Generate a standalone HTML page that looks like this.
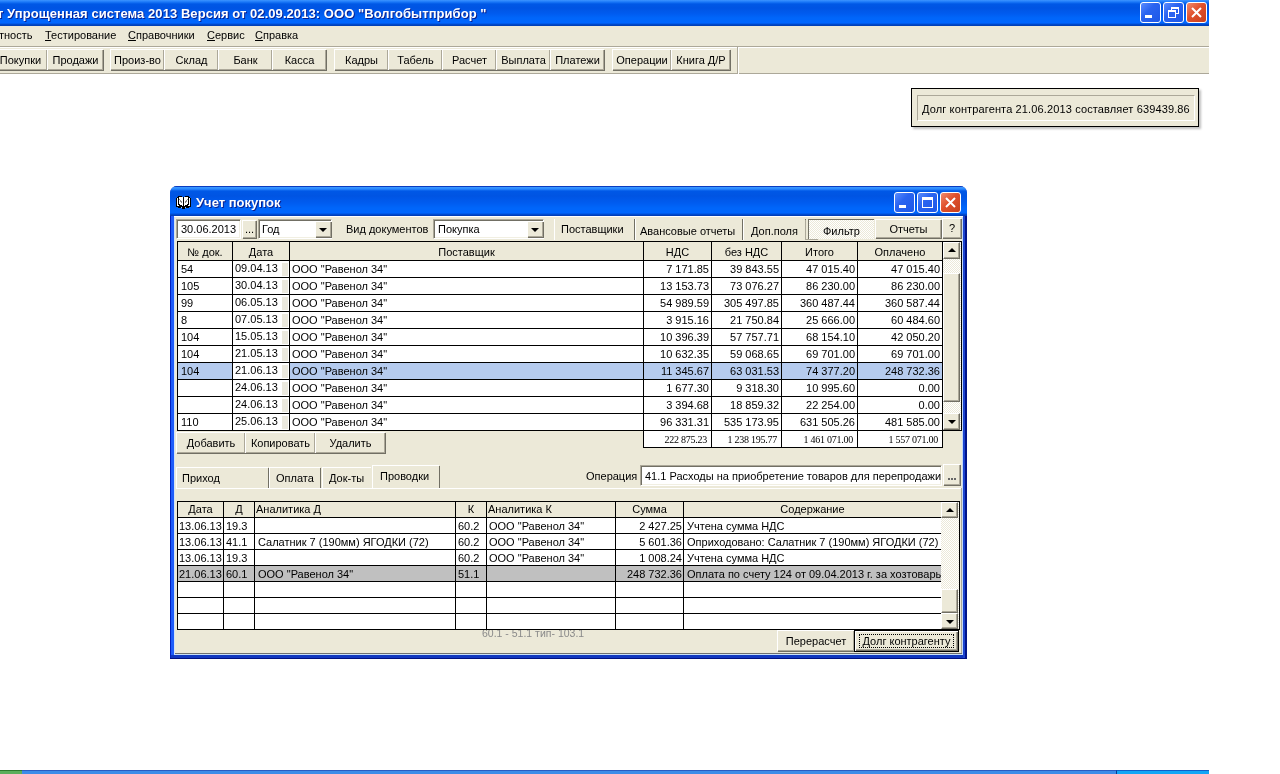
<!DOCTYPE html><html><head><meta charset="utf-8"><style>
*{margin:0;padding:0;box-sizing:border-box}
html{background:#fff}
body{will-change:transform;width:1280px;height:774px;overflow:hidden;background:#fff;position:relative;font-family:"Liberation Sans",sans-serif;font-size:11px;color:#000}
.a{position:absolute}
.t{position:absolute;white-space:nowrap;line-height:16px;font-size:11px}
.face{background:#ECE9D8}
.btn{position:absolute;background:#ECE9D8;border-top:1px solid #fff;border-left:1px solid #fff;box-shadow:inset -1px -1px 0 #ACA899, 1px 1px 0 #716F64;white-space:nowrap;text-align:center;line-height:18px}
.xpbtn{position:absolute;width:21px;height:21px;border:1px solid #fff;border-radius:3px;background:linear-gradient(135deg,#5A8CFF 0%,#2A64F0 40%,#1D58E8 100%)}
.xpclose{background:linear-gradient(135deg,#F08A6E 0%,#E0502C 45%,#C8401E 100%)}
.sunk{position:absolute;background:#fff;border-top:1px solid #ACA899;border-left:1px solid #ACA899;border-bottom:1px solid #fff;border-right:1px solid #fff;box-shadow:inset 1px 1px 0 #716F64, inset -1px -1px 0 #F1EFE2}
.hl{position:absolute;height:1px;background:#000}
.vl{position:absolute;width:1px;background:#000}
.hdr{position:absolute;background:#ECE9D8}
.sb{position:absolute;background:#ECE9D8;border-top:1px solid #fff;border-left:1px solid #fff;box-shadow:inset -1px -1px 0 #ACA899, inset 0 0 0 0 #000, 0 0 0 0 #000;border-right:1px solid #716F64;border-bottom:1px solid #716F64}
.track{position:absolute;background-color:#F4F3EE;background-image:repeating-conic-gradient(#ECE9D8 0% 25%, #fff 0% 50%);background-size:2px 2px}
.arrup{position:absolute;width:0;height:0;border-left:4px solid transparent;border-right:4px solid transparent;border-bottom:4px solid #000}
.arrdn{position:absolute;width:0;height:0;border-left:4px solid transparent;border-right:4px solid transparent;border-top:4px solid #000}
</style></head><body>
<div class="a" style="left:0;top:0;width:1209px;height:26px;background:linear-gradient(#3D95FF 0px,#1A78F8 2px,#0058E6 4px,#0054E3 8px,#005CF0 14px,#0066FA 18px,#0066FF 23px,#0050D8 24px,#0040B8 25px,#0040B8 26px)"></div>
<div class="t" style="left:-3px;top:6px;color:#fff;font-weight:bold;font-size:13px;line-height:16px;letter-spacing:0.06px;text-shadow:1px 1px 0 #0A1E8C">т Упрощенная система 2013 Версия от 02.09.2013: ООО "Волгобытприбор "</div>
<div class="xpbtn" style="left:1140px;top:2px"><div class="a" style="left:4px;top:12px;width:7px;height:3px;background:#fff"></div></div>
<div class="xpbtn" style="left:1163px;top:2px"><div class="a" style="left:7px;top:4px;width:8px;height:7px;border:1px solid #fff;border-top-width:2px"></div><div class="a" style="left:4px;top:7px;width:8px;height:8px;border:1px solid #fff;border-top-width:2px;background:#2A64F0"></div></div>
<div class="xpbtn xpclose" style="left:1186px;top:2px"><svg class="a" style="left:0;top:0" width="19" height="19"><path d="M5 5L14 14M14 5L5 14" stroke="#fff" stroke-width="2"/></svg></div>
<div class="a face" style="left:0;top:26px;width:1209px;height:48px"></div>
<div class="a" style="left:0;top:46px;width:1209px;height:1px;background:#ACA899"></div>
<div class="a" style="left:0;top:47px;width:1209px;height:1px;background:#fff"></div>
<div class="a" style="left:0;top:73px;width:1209px;height:1px;background:#ACA899"></div>
<div class="t" style="left:-1px;top:27px">тность</div>
<div class="t" style="left:45px;top:27px"><u>Т</u>естирование</div>
<div class="t" style="left:128px;top:27px"><u>С</u>правочники</div>
<div class="t" style="left:207px;top:27px"><u>С</u>ервис</div>
<div class="t" style="left:255px;top:27px"><u>С</u>правка</div>
<div class="btn" style="left:-7px;top:49px;width:54px;height:21px;line-height:20px">Покупки</div>
<div class="btn" style="left:47px;top:49px;width:56px;height:21px;line-height:20px">Продажи</div>
<div class="btn" style="left:110px;top:49px;width:54px;height:21px;line-height:20px">Произ-во</div>
<div class="btn" style="left:164px;top:49px;width:54px;height:21px;line-height:20px">Склад</div>
<div class="btn" style="left:218px;top:49px;width:54px;height:21px;line-height:20px">Банк</div>
<div class="btn" style="left:272px;top:49px;width:54px;height:21px;line-height:20px">Касса</div>
<div class="btn" style="left:334px;top:49px;width:54px;height:21px;line-height:20px">Кадры</div>
<div class="btn" style="left:388px;top:49px;width:54px;height:21px;line-height:20px">Табель</div>
<div class="btn" style="left:442px;top:49px;width:54px;height:21px;line-height:20px">Расчет</div>
<div class="btn" style="left:496px;top:49px;width:54px;height:21px;line-height:20px">Выплата</div>
<div class="btn" style="left:550px;top:49px;width:54px;height:21px;line-height:20px">Платежи</div>
<div class="btn" style="left:612px;top:49px;width:59px;height:21px;line-height:20px">Операции</div>
<div class="btn" style="left:671px;top:49px;width:59px;height:21px;line-height:20px">Книга Д/Р</div>
<div class="a" style="left:737px;top:46px;width:1px;height:28px;background:#ACA899"></div><div class="a" style="left:738px;top:47px;width:1px;height:27px;background:#fff"></div>
<div class="a" style="left:913px;top:90px;width:288px;height:39px;background:rgba(0,0,0,0.25);filter:blur(1px)"></div>
<div class="a face" style="left:911px;top:88px;width:288px;height:39px;border:1px solid #000"></div>
<div class="a" style="left:917px;top:95px;width:278px;height:26px;border-top:1px solid #ACA899;border-left:1px solid #ACA899;border-bottom:1px solid #fff;border-right:1px solid #fff"></div>
<div class="t" style="left:922px;top:101px;letter-spacing:0.13px">Долг контрагента 21.06.2013 составляет 639439.86</div>
<div class="a" style="left:0;top:770px;width:1209px;height:4px;background:#3C8CE8;border-top:1px solid #2A5CC0"></div>
<div class="a" style="left:0;top:770px;width:22px;height:4px;background:#5CAE5C;border-top:1px solid #2E7A2E"></div>
<div class="a" style="left:1116px;top:770px;width:93px;height:4px;background:#12A6F6;border-top:1px solid #1060C8;border-left:1px solid #0A3A90"></div>
<div class="a" style="left:170px;top:186px;width:797px;height:473px;background:#1038C0;border-radius:7px 7px 0 0"></div>
<div class="a" style="left:170px;top:186px;width:797px;height:30px;border-radius:7px 7px 0 0;background:linear-gradient(#0A3CC0 0px,#0A3CC0 1px,#3C9AFF 1px,#2A88FF 3px,#0058E6 5px,#0054E3 10px,#005CF0 17px,#0066FA 22px,#0066FF 27px,#0050D8 28px,#0038B0 30px)"></div>
<div class="a" style="left:170px;top:216px;width:1px;height:443px;background:#0020C0"></div><div class="a" style="left:171px;top:216px;width:3px;height:439px;background:#1E5CFA"></div><div class="a" style="left:174px;top:216px;width:1px;height:439px;background:#D0E2F8"></div>
<div class="a" style="left:962px;top:216px;width:1px;height:439px;background:#C0D8F8"></div><div class="a" style="left:963px;top:216px;width:2px;height:443px;background:#1C44D0"></div><div class="a" style="left:965px;top:216px;width:2px;height:443px;background:#001488"></div>
<div class="a" style="left:174px;top:654px;width:789px;height:1px;background:#C8E0F8"></div><div class="a" style="left:171px;top:655px;width:792px;height:3px;background:#1038C0"></div><div class="a" style="left:170px;top:658px;width:797px;height:1px;background:#001080"></div>
<div class="a face" style="left:175px;top:216px;width:787px;height:438px"></div>
<div class="a" style="left:175px;top:653px;width:787px;height:1px;background:#6E7070"></div>
<svg class="a" style="left:176px;top:196px" width="15" height="13" viewBox="0 0 15 13" shape-rendering="crispEdges"><rect x="2" y="0" width="1" height="1" fill="#000"/><rect x="3" y="0" width="1" height="1" fill="#000"/><rect x="4" y="0" width="1" height="1" fill="#000"/><rect x="5" y="0" width="1" height="1" fill="#000"/><rect x="9" y="0" width="1" height="1" fill="#000"/><rect x="10" y="0" width="1" height="1" fill="#000"/><rect x="11" y="0" width="1" height="1" fill="#000"/><rect x="12" y="0" width="1" height="1" fill="#000"/><rect x="1" y="1" width="1" height="1" fill="#000"/><rect x="2" y="1" width="1" height="1" fill="#000"/><rect x="3" y="1" width="1" height="1" fill="#fff"/><rect x="4" y="1" width="1" height="1" fill="#fff"/><rect x="5" y="1" width="1" height="1" fill="#fff"/><rect x="6" y="1" width="1" height="1" fill="#fff"/><rect x="7" y="1" width="1" height="1" fill="#000"/><rect x="8" y="1" width="1" height="1" fill="#fff"/><rect x="9" y="1" width="1" height="1" fill="#fff"/><rect x="10" y="1" width="1" height="1" fill="#fff"/><rect x="11" y="1" width="1" height="1" fill="#fff"/><rect x="12" y="1" width="1" height="1" fill="#000"/><rect x="13" y="1" width="1" height="1" fill="#000"/><rect x="0" y="2" width="1" height="1" fill="#000"/><rect x="1" y="2" width="1" height="1" fill="#fff"/><rect x="2" y="2" width="1" height="1" fill="#000"/><rect x="3" y="2" width="1" height="1" fill="#fff"/><rect x="4" y="2" width="1" height="1" fill="#fff"/><rect x="5" y="2" width="1" height="1" fill="#fff"/><rect x="6" y="2" width="1" height="1" fill="#fff"/><rect x="7" y="2" width="1" height="1" fill="#000"/><rect x="8" y="2" width="1" height="1" fill="#fff"/><rect x="9" y="2" width="1" height="1" fill="#fff"/><rect x="10" y="2" width="1" height="1" fill="#fff"/><rect x="11" y="2" width="1" height="1" fill="#fff"/><rect x="12" y="2" width="1" height="1" fill="#000"/><rect x="13" y="2" width="1" height="1" fill="#fff"/><rect x="14" y="2" width="1" height="1" fill="#000"/><rect x="0" y="3" width="1" height="1" fill="#000"/><rect x="1" y="3" width="1" height="1" fill="#fff"/><rect x="2" y="3" width="1" height="1" fill="#000"/><rect x="3" y="3" width="1" height="1" fill="#8C8C8C"/><rect x="4" y="3" width="1" height="1" fill="#fff"/><rect x="5" y="3" width="1" height="1" fill="#fff"/><rect x="6" y="3" width="1" height="1" fill="#fff"/><rect x="7" y="3" width="1" height="1" fill="#000"/><rect x="8" y="3" width="1" height="1" fill="#fff"/><rect x="9" y="3" width="1" height="1" fill="#fff"/><rect x="10" y="3" width="1" height="1" fill="#fff"/><rect x="11" y="3" width="1" height="1" fill="#8C8C8C"/><rect x="12" y="3" width="1" height="1" fill="#000"/><rect x="13" y="3" width="1" height="1" fill="#fff"/><rect x="14" y="3" width="1" height="1" fill="#000"/><rect x="0" y="4" width="1" height="1" fill="#000"/><rect x="1" y="4" width="1" height="1" fill="#fff"/><rect x="2" y="4" width="1" height="1" fill="#000"/><rect x="3" y="4" width="1" height="1" fill="#fff"/><rect x="4" y="4" width="1" height="1" fill="#8C8C8C"/><rect x="5" y="4" width="1" height="1" fill="#fff"/><rect x="6" y="4" width="1" height="1" fill="#fff"/><rect x="7" y="4" width="1" height="1" fill="#000"/><rect x="8" y="4" width="1" height="1" fill="#fff"/><rect x="9" y="4" width="1" height="1" fill="#fff"/><rect x="10" y="4" width="1" height="1" fill="#8C8C8C"/><rect x="11" y="4" width="1" height="1" fill="#fff"/><rect x="12" y="4" width="1" height="1" fill="#000"/><rect x="13" y="4" width="1" height="1" fill="#fff"/><rect x="14" y="4" width="1" height="1" fill="#000"/><rect x="0" y="5" width="1" height="1" fill="#000"/><rect x="1" y="5" width="1" height="1" fill="#fff"/><rect x="2" y="5" width="1" height="1" fill="#000"/><rect x="3" y="5" width="1" height="1" fill="#fff"/><rect x="4" y="5" width="1" height="1" fill="#8C8C8C"/><rect x="5" y="5" width="1" height="1" fill="#8C8C8C"/><rect x="6" y="5" width="1" height="1" fill="#fff"/><rect x="7" y="5" width="1" height="1" fill="#000"/><rect x="8" y="5" width="1" height="1" fill="#fff"/><rect x="9" y="5" width="1" height="1" fill="#8C8C8C"/><rect x="10" y="5" width="1" height="1" fill="#8C8C8C"/><rect x="11" y="5" width="1" height="1" fill="#fff"/><rect x="12" y="5" width="1" height="1" fill="#000"/><rect x="13" y="5" width="1" height="1" fill="#fff"/><rect x="14" y="5" width="1" height="1" fill="#000"/><rect x="0" y="6" width="1" height="1" fill="#000"/><rect x="1" y="6" width="1" height="1" fill="#fff"/><rect x="2" y="6" width="1" height="1" fill="#000"/><rect x="3" y="6" width="1" height="1" fill="#fff"/><rect x="4" y="6" width="1" height="1" fill="#fff"/><rect x="5" y="6" width="1" height="1" fill="#8C8C8C"/><rect x="6" y="6" width="1" height="1" fill="#fff"/><rect x="7" y="6" width="1" height="1" fill="#000"/><rect x="8" y="6" width="1" height="1" fill="#fff"/><rect x="9" y="6" width="1" height="1" fill="#8C8C8C"/><rect x="10" y="6" width="1" height="1" fill="#fff"/><rect x="11" y="6" width="1" height="1" fill="#fff"/><rect x="12" y="6" width="1" height="1" fill="#000"/><rect x="13" y="6" width="1" height="1" fill="#fff"/><rect x="14" y="6" width="1" height="1" fill="#000"/><rect x="0" y="7" width="1" height="1" fill="#000"/><rect x="1" y="7" width="1" height="1" fill="#fff"/><rect x="2" y="7" width="1" height="1" fill="#000"/><rect x="3" y="7" width="1" height="1" fill="#fff"/><rect x="4" y="7" width="1" height="1" fill="#fff"/><rect x="5" y="7" width="1" height="1" fill="#fff"/><rect x="6" y="7" width="1" height="1" fill="#fff"/><rect x="7" y="7" width="1" height="1" fill="#000"/><rect x="8" y="7" width="1" height="1" fill="#fff"/><rect x="9" y="7" width="1" height="1" fill="#fff"/><rect x="10" y="7" width="1" height="1" fill="#fff"/><rect x="11" y="7" width="1" height="1" fill="#fff"/><rect x="12" y="7" width="1" height="1" fill="#000"/><rect x="13" y="7" width="1" height="1" fill="#fff"/><rect x="14" y="7" width="1" height="1" fill="#000"/><rect x="0" y="8" width="1" height="1" fill="#000"/><rect x="1" y="8" width="1" height="1" fill="#fff"/><rect x="2" y="8" width="1" height="1" fill="#000"/><rect x="3" y="8" width="1" height="1" fill="#000"/><rect x="4" y="8" width="1" height="1" fill="#fff"/><rect x="5" y="8" width="1" height="1" fill="#fff"/><rect x="6" y="8" width="1" height="1" fill="#fff"/><rect x="7" y="8" width="1" height="1" fill="#000"/><rect x="8" y="8" width="1" height="1" fill="#fff"/><rect x="9" y="8" width="1" height="1" fill="#fff"/><rect x="10" y="8" width="1" height="1" fill="#fff"/><rect x="11" y="8" width="1" height="1" fill="#000"/><rect x="12" y="8" width="1" height="1" fill="#000"/><rect x="13" y="8" width="1" height="1" fill="#fff"/><rect x="14" y="8" width="1" height="1" fill="#000"/><rect x="0" y="9" width="1" height="1" fill="#000"/><rect x="1" y="9" width="1" height="1" fill="#fff"/><rect x="2" y="9" width="1" height="1" fill="#fff"/><rect x="3" y="9" width="1" height="1" fill="#000"/><rect x="4" y="9" width="1" height="1" fill="#000"/><rect x="5" y="9" width="1" height="1" fill="#000"/><rect x="6" y="9" width="1" height="1" fill="#fff"/><rect x="7" y="9" width="1" height="1" fill="#000"/><rect x="8" y="9" width="1" height="1" fill="#fff"/><rect x="9" y="9" width="1" height="1" fill="#000"/><rect x="10" y="9" width="1" height="1" fill="#000"/><rect x="11" y="9" width="1" height="1" fill="#000"/><rect x="12" y="9" width="1" height="1" fill="#fff"/><rect x="13" y="9" width="1" height="1" fill="#fff"/><rect x="14" y="9" width="1" height="1" fill="#000"/><rect x="0" y="10" width="1" height="1" fill="#000"/><rect x="1" y="10" width="1" height="1" fill="#000"/><rect x="2" y="10" width="1" height="1" fill="#000"/><rect x="3" y="10" width="1" height="1" fill="#000"/><rect x="4" y="10" width="1" height="1" fill="#000"/><rect x="5" y="10" width="1" height="1" fill="#000"/><rect x="6" y="10" width="1" height="1" fill="#000"/><rect x="7" y="10" width="1" height="1" fill="#000"/><rect x="8" y="10" width="1" height="1" fill="#000"/><rect x="9" y="10" width="1" height="1" fill="#000"/><rect x="10" y="10" width="1" height="1" fill="#000"/><rect x="11" y="10" width="1" height="1" fill="#000"/><rect x="12" y="10" width="1" height="1" fill="#000"/><rect x="13" y="10" width="1" height="1" fill="#000"/><rect x="14" y="10" width="1" height="1" fill="#000"/><rect x="2" y="11" width="1" height="1" fill="#000"/><rect x="3" y="11" width="1" height="1" fill="#000"/><rect x="4" y="11" width="1" height="1" fill="#000"/><rect x="5" y="11" width="1" height="1" fill="#A8D0FF"/><rect x="6" y="11" width="1" height="1" fill="#000"/><rect x="7" y="11" width="1" height="1" fill="#000"/><rect x="8" y="11" width="1" height="1" fill="#000"/><rect x="9" y="11" width="1" height="1" fill="#A8D0FF"/><rect x="10" y="11" width="1" height="1" fill="#000"/><rect x="11" y="11" width="1" height="1" fill="#000"/><rect x="12" y="11" width="1" height="1" fill="#000"/><rect x="6" y="12" width="1" height="1" fill="#000"/><rect x="7" y="12" width="1" height="1" fill="#000"/><rect x="8" y="12" width="1" height="1" fill="#000"/></svg>
<div class="t" style="left:196px;top:195px;color:#fff;font-weight:bold;font-size:13px;text-shadow:1px 1px 0 #0A1E8C">Учет покупок</div>
<div class="xpbtn" style="left:894px;top:192px"><div class="a" style="left:4px;top:12px;width:7px;height:3px;background:#fff"></div></div>
<div class="xpbtn" style="left:917px;top:192px"><div class="a" style="left:4px;top:4px;width:11px;height:11px;border:1px solid #fff;border-top-width:3px"></div></div>
<div class="xpbtn xpclose" style="left:940px;top:192px"><svg class="a" style="left:0;top:0" width="19" height="19"><path d="M5 5L14 14M14 5L5 14" stroke="#fff" stroke-width="2"/></svg></div>
<div class="sunk" style="left:176px;top:219px;width:65px;height:20px"></div>
<div class="t" style="left:181px;top:221px">30.06.2013</div>
<div class="btn" style="left:242px;top:220px;width:14px;height:18px;line-height:16px">...</div>
<div class="sunk" style="left:258px;top:219px;width:74px;height:20px"></div>
<div class="t" style="left:262px;top:221px">Год</div>
<div class="btn" style="left:315px;top:221px;width:16px;height:16px"><div class="arrdn" style="left:3px;top:6px"></div></div>
<div class="t" style="left:346px;top:221px">Вид документов</div>
<div class="sunk" style="left:433px;top:219px;width:111px;height:20px"></div>
<div class="t" style="left:438px;top:221px">Покупка</div>
<div class="btn" style="left:527px;top:221px;width:16px;height:16px"><div class="arrdn" style="left:3px;top:6px"></div></div>
<div class="a" style="left:174px;top:216px;width:789px;height:1px;background:#fff"></div>
<div class="a" style="left:554px;top:219px;width:1px;height:21px;background:#fff"></div>
<div class="a" style="left:634px;top:219px;width:1px;height:21px;background:#716F64"></div>
<div class="t" style="left:561px;top:221px">Поставщики</div>
<div class="a" style="left:635px;top:219px;width:1px;height:21px;background:#fff"></div>
<div class="a" style="left:742px;top:219px;width:1px;height:21px;background:#716F64"></div>
<div class="t" style="left:640px;top:223px">Авансовые отчеты</div>
<div class="a" style="left:743px;top:219px;width:1px;height:21px;background:#fff"></div>
<div class="a" style="left:805px;top:219px;width:1px;height:21px;background:#716F64"></div>
<div class="t" style="left:751px;top:223px">Доп.поля</div>
<div class="btn" style="left:875px;top:219px;width:66px;height:19px;line-height:18px">Отчеты</div>
<div class="btn" style="left:942px;top:218px;width:19px;height:20px;line-height:18px">?</div>
<div class="a" style="left:805px;top:220px;width:1px;height:20px;background:#ACA899"></div><div class="a" style="left:805px;top:239px;width:13px;height:1px;background:#ACA899"></div>
<div class="track" style="left:808px;top:219px;width:66px;height:20px;border-top:1px solid #716F64;border-left:1px solid #716F64"></div>
<div class="t" style="left:823px;top:223px">Фильтр</div>
<div class="a" style="left:177px;top:241px;width:766px;height:190px;background:#fff"></div>
<div class="hdr" style="left:178px;top:242px;width:764px;height:18px"></div>
<div class="t" style="left:178px;top:244px;width:54px;text-align:center">№ док.</div>
<div class="t" style="left:233px;top:244px;width:56px;text-align:center">Дата</div>
<div class="t" style="left:290px;top:244px;width:353px;text-align:center">Поставщик</div>
<div class="t" style="left:644px;top:244px;width:67px;text-align:center">НДС</div>
<div class="t" style="left:712px;top:244px;width:69px;text-align:center">без НДС</div>
<div class="t" style="left:782px;top:244px;width:75px;text-align:center">Итого</div>
<div class="t" style="left:858px;top:244px;width:84px;text-align:center">Оплачено</div>
<div class="a" style="left:282px;top:263px;width:6px;height:13px;background:#EBE9DE"></div>
<div class="t" style="left:181px;top:261px">54</div>
<div class="t" style="left:235px;top:260px">09.04.13</div>
<div class="t" style="left:292px;top:261px">ООО "Равенол 34"</div>
<div class="t" style="left:643px;top:261px;width:66px;text-align:right">7 171.85</div>
<div class="t" style="left:711px;top:261px;width:68px;text-align:right">39 843.55</div>
<div class="t" style="left:781px;top:261px;width:74px;text-align:right">47 015.40</div>
<div class="t" style="left:857px;top:261px;width:83px;text-align:right">47 015.40</div>
<div class="a" style="left:282px;top:280px;width:6px;height:13px;background:#EBE9DE"></div>
<div class="t" style="left:181px;top:278px">105</div>
<div class="t" style="left:235px;top:277px">30.04.13</div>
<div class="t" style="left:292px;top:278px">ООО "Равенол 34"</div>
<div class="t" style="left:643px;top:278px;width:66px;text-align:right">13 153.73</div>
<div class="t" style="left:711px;top:278px;width:68px;text-align:right">73 076.27</div>
<div class="t" style="left:781px;top:278px;width:74px;text-align:right">86 230.00</div>
<div class="t" style="left:857px;top:278px;width:83px;text-align:right">86 230.00</div>
<div class="a" style="left:282px;top:297px;width:6px;height:13px;background:#EBE9DE"></div>
<div class="t" style="left:181px;top:295px">99</div>
<div class="t" style="left:235px;top:294px">06.05.13</div>
<div class="t" style="left:292px;top:295px">ООО "Равенол 34"</div>
<div class="t" style="left:643px;top:295px;width:66px;text-align:right">54 989.59</div>
<div class="t" style="left:711px;top:295px;width:68px;text-align:right">305 497.85</div>
<div class="t" style="left:781px;top:295px;width:74px;text-align:right">360 487.44</div>
<div class="t" style="left:857px;top:295px;width:83px;text-align:right">360 587.44</div>
<div class="a" style="left:282px;top:314px;width:6px;height:13px;background:#EBE9DE"></div>
<div class="t" style="left:181px;top:312px">8</div>
<div class="t" style="left:235px;top:311px">07.05.13</div>
<div class="t" style="left:292px;top:312px">ООО "Равенол 34"</div>
<div class="t" style="left:643px;top:312px;width:66px;text-align:right">3 915.16</div>
<div class="t" style="left:711px;top:312px;width:68px;text-align:right">21 750.84</div>
<div class="t" style="left:781px;top:312px;width:74px;text-align:right">25 666.00</div>
<div class="t" style="left:857px;top:312px;width:83px;text-align:right">60 484.60</div>
<div class="a" style="left:282px;top:331px;width:6px;height:13px;background:#EBE9DE"></div>
<div class="t" style="left:181px;top:329px">104</div>
<div class="t" style="left:235px;top:328px">15.05.13</div>
<div class="t" style="left:292px;top:329px">ООО "Равенол 34"</div>
<div class="t" style="left:643px;top:329px;width:66px;text-align:right">10 396.39</div>
<div class="t" style="left:711px;top:329px;width:68px;text-align:right">57 757.71</div>
<div class="t" style="left:781px;top:329px;width:74px;text-align:right">68 154.10</div>
<div class="t" style="left:857px;top:329px;width:83px;text-align:right">42 050.20</div>
<div class="a" style="left:282px;top:348px;width:6px;height:13px;background:#EBE9DE"></div>
<div class="t" style="left:181px;top:346px">104</div>
<div class="t" style="left:235px;top:345px">21.05.13</div>
<div class="t" style="left:292px;top:346px">ООО "Равенол 34"</div>
<div class="t" style="left:643px;top:346px;width:66px;text-align:right">10 632.35</div>
<div class="t" style="left:711px;top:346px;width:68px;text-align:right">59 068.65</div>
<div class="t" style="left:781px;top:346px;width:74px;text-align:right">69 701.00</div>
<div class="t" style="left:857px;top:346px;width:83px;text-align:right">69 701.00</div>
<div class="a" style="left:178px;top:363px;width:764px;height:16px;background:#B5CBEE"></div>
<div class="a" style="left:233px;top:363px;width:56px;height:16px;background:#fff"></div>
<div class="a" style="left:282px;top:365px;width:6px;height:13px;background:#EBE9DE"></div>
<div class="t" style="left:181px;top:363px">104</div>
<div class="t" style="left:235px;top:362px">21.06.13</div>
<div class="t" style="left:292px;top:363px">ООО "Равенол 34"</div>
<div class="t" style="left:643px;top:363px;width:66px;text-align:right">11 345.67</div>
<div class="t" style="left:711px;top:363px;width:68px;text-align:right">63 031.53</div>
<div class="t" style="left:781px;top:363px;width:74px;text-align:right">74 377.20</div>
<div class="t" style="left:857px;top:363px;width:83px;text-align:right">248 732.36</div>
<div class="a" style="left:282px;top:382px;width:6px;height:13px;background:#EBE9DE"></div>
<div class="t" style="left:181px;top:380px"></div>
<div class="t" style="left:235px;top:379px">24.06.13</div>
<div class="t" style="left:292px;top:380px">ООО "Равенол 34"</div>
<div class="t" style="left:643px;top:380px;width:66px;text-align:right">1 677.30</div>
<div class="t" style="left:711px;top:380px;width:68px;text-align:right">9 318.30</div>
<div class="t" style="left:781px;top:380px;width:74px;text-align:right">10 995.60</div>
<div class="t" style="left:857px;top:380px;width:83px;text-align:right">0.00</div>
<div class="a" style="left:282px;top:399px;width:6px;height:13px;background:#EBE9DE"></div>
<div class="t" style="left:181px;top:397px"></div>
<div class="t" style="left:235px;top:396px">24.06.13</div>
<div class="t" style="left:292px;top:397px">ООО "Равенол 34"</div>
<div class="t" style="left:643px;top:397px;width:66px;text-align:right">3 394.68</div>
<div class="t" style="left:711px;top:397px;width:68px;text-align:right">18 859.32</div>
<div class="t" style="left:781px;top:397px;width:74px;text-align:right">22 254.00</div>
<div class="t" style="left:857px;top:397px;width:83px;text-align:right">0.00</div>
<div class="a" style="left:282px;top:416px;width:6px;height:13px;background:#EBE9DE"></div>
<div class="t" style="left:181px;top:414px">110</div>
<div class="t" style="left:235px;top:413px">25.06.13</div>
<div class="t" style="left:292px;top:414px">ООО "Равенол 34"</div>
<div class="t" style="left:643px;top:414px;width:66px;text-align:right">96 331.31</div>
<div class="t" style="left:711px;top:414px;width:68px;text-align:right">535 173.95</div>
<div class="t" style="left:781px;top:414px;width:74px;text-align:right">631 505.26</div>
<div class="t" style="left:857px;top:414px;width:83px;text-align:right">481 585.00</div>
<div class="hl" style="left:177px;top:241px;width:766px"></div>
<div class="hl" style="left:177px;top:260px;width:766px"></div>
<div class="hl" style="left:177px;top:277px;width:766px"></div>
<div class="hl" style="left:177px;top:294px;width:766px"></div>
<div class="hl" style="left:177px;top:311px;width:766px"></div>
<div class="hl" style="left:177px;top:328px;width:766px"></div>
<div class="hl" style="left:177px;top:345px;width:766px"></div>
<div class="hl" style="left:177px;top:362px;width:766px"></div>
<div class="hl" style="left:177px;top:379px;width:766px"></div>
<div class="hl" style="left:177px;top:396px;width:766px"></div>
<div class="hl" style="left:177px;top:413px;width:766px"></div>
<div class="hl" style="left:177px;top:430px;width:766px"></div>
<div class="vl" style="left:177px;top:241px;height:190px"></div>
<div class="vl" style="left:232px;top:241px;height:190px"></div>
<div class="vl" style="left:289px;top:241px;height:190px"></div>
<div class="vl" style="left:643px;top:241px;height:190px"></div>
<div class="vl" style="left:711px;top:241px;height:190px"></div>
<div class="vl" style="left:781px;top:241px;height:190px"></div>
<div class="vl" style="left:857px;top:241px;height:190px"></div>
<div class="vl" style="left:942px;top:241px;height:190px"></div>
<div class="vl" style="left:961px;top:241px;height:190px"></div>
<div class="hl" style="left:942px;top:241px;width:20px"></div><div class="hl" style="left:942px;top:430px;width:20px"></div>
<div class="track" style="left:943px;top:242px;width:18px;height:188px"></div>
<div class="sb" style="left:943px;top:242px;width:17px;height:17px"><div class="arrup" style="left:4px;top:5px"></div></div>
<div class="sb" style="left:943px;top:273px;width:17px;height:129px"></div>
<div class="sb" style="left:943px;top:413px;width:17px;height:17px"><div class="arrdn" style="left:4px;top:6px"></div></div>
<div class="a" style="left:643px;top:430px;width:300px;height:18px;background:#fff;border:1px solid #000"></div>
<div class="t" style="left:643px;top:432px;width:64px;text-align:right;font-family:'Liberation Serif',serif;font-size:10px;letter-spacing:-0.25px;color:#000">222 875.23</div>
<div class="vl" style="left:711px;top:430px;height:18px"></div>
<div class="t" style="left:711px;top:432px;width:66px;text-align:right;font-family:'Liberation Serif',serif;font-size:10px;letter-spacing:-0.25px;color:#000">1 238 195.77</div>
<div class="vl" style="left:781px;top:430px;height:18px"></div>
<div class="t" style="left:781px;top:432px;width:72px;text-align:right;font-family:'Liberation Serif',serif;font-size:10px;letter-spacing:-0.25px;color:#000">1 461 071.00</div>
<div class="vl" style="left:857px;top:430px;height:18px"></div>
<div class="t" style="left:857px;top:432px;width:81px;text-align:right;font-family:'Liberation Serif',serif;font-size:10px;letter-spacing:-0.25px;color:#000">1 557 071.00</div>
<div class="btn" style="left:176px;top:432px;width:69px;height:21px;line-height:20px">Добавить</div>
<div class="btn" style="left:245px;top:432px;width:70px;height:21px;line-height:20px">Копировать</div>
<div class="btn" style="left:315px;top:432px;width:70px;height:21px;line-height:20px">Удалить</div>
<div class="a" style="left:176px;top:488px;width:786px;height:1px;background:#fff"></div>
<div class="a" style="left:176px;top:467px;width:92px;height:1px;background:#fff"></div>
<div class="a" style="left:176px;top:467px;width:1px;height:21px;background:#fff"></div>
<div class="a" style="left:268px;top:468px;width:1px;height:20px;background:#716F64"></div>
<div class="a" style="left:269px;top:467px;width:51px;height:1px;background:#fff"></div>
<div class="a" style="left:269px;top:467px;width:1px;height:21px;background:#fff"></div>
<div class="a" style="left:320px;top:468px;width:1px;height:20px;background:#716F64"></div>
<div class="a" style="left:322px;top:467px;width:49px;height:1px;background:#fff"></div>
<div class="a" style="left:322px;top:467px;width:1px;height:21px;background:#fff"></div>
<div class="a" style="left:372px;top:465px;width:67px;height:1px;background:#fff"></div>
<div class="a" style="left:372px;top:465px;width:1px;height:23px;background:#fff"></div>
<div class="a" style="left:439px;top:466px;width:1px;height:22px;background:#716F64"></div>
<div class="t" style="left:182px;top:470px">Приход</div>
<div class="t" style="left:276px;top:470px">Оплата</div>
<div class="t" style="left:329px;top:470px">Док-ты</div>
<div class="t" style="left:380px;top:468px">Проводки</div>
<div class="t" style="left:586px;top:468px">Операция</div>
<div class="sunk" style="left:640px;top:465px;width:302px;height:21px"></div>
<div class="t" style="left:645px;top:468px">41.1 Расходы на приобретение товаров для перепродажи</div>
<div class="btn" style="left:943px;top:464px;width:17px;height:21px"><div class="a" style="left:4px;top:13px;width:2px;height:2px;background:#666"></div><div class="a" style="left:7px;top:13px;width:2px;height:2px;background:#666"></div><div class="a" style="left:10px;top:13px;width:2px;height:2px;background:#666"></div></div>
<div class="a" style="left:961px;top:488px;width:1px;height:165px;background:#ACA899"></div>
<div class="a" style="left:177px;top:501px;width:783px;height:129px;background:#fff"></div>
<div class="hdr" style="left:178px;top:502px;width:763px;height:15px"></div>
<div class="t" style="left:178px;top:501px;width:45px;text-align:center">Дата</div>
<div class="t" style="left:224px;top:501px;width:30px;text-align:center">Д</div>
<div class="t" style="left:256px;top:501px">Аналитика Д</div>
<div class="t" style="left:456px;top:501px;width:30px;text-align:center">К</div>
<div class="t" style="left:488px;top:501px">Аналитика К</div>
<div class="t" style="left:616px;top:501px;width:67px;text-align:center">Сумма</div>
<div class="t" style="left:684px;top:501px;width:257px;text-align:center">Содержание</div>
<div class="t" style="left:179px;top:518px">13.06.13</div>
<div class="t" style="left:226px;top:518px">19.3</div>
<div class="t" style="left:258px;top:518px"></div>
<div class="t" style="left:458px;top:518px">60.2</div>
<div class="t" style="left:489px;top:518px">ООО "Равенол 34"</div>
<div class="t" style="left:615px;top:518px;width:67px;text-align:right">2 427.25</div>
<div class="t" style="left:687px;top:518px;width:254px;overflow:hidden">Учтена сумма НДС</div>
<div class="t" style="left:179px;top:534px">13.06.13</div>
<div class="t" style="left:226px;top:534px">41.1</div>
<div class="t" style="left:258px;top:534px">Салатник 7 (190мм) ЯГОДКИ (72)</div>
<div class="t" style="left:458px;top:534px">60.2</div>
<div class="t" style="left:489px;top:534px">ООО "Равенол 34"</div>
<div class="t" style="left:615px;top:534px;width:67px;text-align:right">5 601.36</div>
<div class="t" style="left:687px;top:534px;width:254px;overflow:hidden">Оприходовано: Салатник 7 (190мм) ЯГОДКИ (72)</div>
<div class="t" style="left:179px;top:550px">13.06.13</div>
<div class="t" style="left:226px;top:550px">19.3</div>
<div class="t" style="left:258px;top:550px"></div>
<div class="t" style="left:458px;top:550px">60.2</div>
<div class="t" style="left:489px;top:550px">ООО "Равенол 34"</div>
<div class="t" style="left:615px;top:550px;width:67px;text-align:right">1 008.24</div>
<div class="t" style="left:687px;top:550px;width:254px;overflow:hidden">Учтена сумма НДС</div>
<div class="a" style="left:178px;top:566px;width:763px;height:15px;background:#C0C0C0"></div>
<div class="t" style="left:179px;top:566px">21.06.13</div>
<div class="t" style="left:226px;top:566px">60.1</div>
<div class="t" style="left:258px;top:566px">ООО "Равенол 34"</div>
<div class="t" style="left:458px;top:566px">51.1</div>
<div class="t" style="left:489px;top:566px"></div>
<div class="t" style="left:615px;top:566px;width:67px;text-align:right">248 732.36</div>
<div class="t" style="left:687px;top:566px;width:254px;overflow:hidden">Оплата по счету 124 от 09.04.2013 г. за хозтоварь</div>
<div class="t" style="left:179px;top:582px"></div>
<div class="t" style="left:226px;top:582px"></div>
<div class="t" style="left:258px;top:582px"></div>
<div class="t" style="left:458px;top:582px"></div>
<div class="t" style="left:489px;top:582px"></div>
<div class="t" style="left:615px;top:582px;width:67px;text-align:right"></div>
<div class="t" style="left:687px;top:582px;width:254px;overflow:hidden"></div>
<div class="t" style="left:179px;top:598px"></div>
<div class="t" style="left:226px;top:598px"></div>
<div class="t" style="left:258px;top:598px"></div>
<div class="t" style="left:458px;top:598px"></div>
<div class="t" style="left:489px;top:598px"></div>
<div class="t" style="left:615px;top:598px;width:67px;text-align:right"></div>
<div class="t" style="left:687px;top:598px;width:254px;overflow:hidden"></div>
<div class="t" style="left:179px;top:614px"></div>
<div class="t" style="left:226px;top:614px"></div>
<div class="t" style="left:258px;top:614px"></div>
<div class="t" style="left:458px;top:614px"></div>
<div class="t" style="left:489px;top:614px"></div>
<div class="t" style="left:615px;top:614px;width:67px;text-align:right"></div>
<div class="t" style="left:687px;top:614px;width:254px;overflow:hidden"></div>
<div class="hl" style="left:177px;top:501px;width:783px"></div>
<div class="hl" style="left:177px;top:517px;width:764px"></div>
<div class="hl" style="left:177px;top:533px;width:764px"></div>
<div class="hl" style="left:177px;top:549px;width:764px"></div>
<div class="hl" style="left:177px;top:565px;width:764px"></div>
<div class="hl" style="left:177px;top:581px;width:764px"></div>
<div class="hl" style="left:177px;top:597px;width:764px"></div>
<div class="hl" style="left:177px;top:613px;width:764px"></div>
<div class="hl" style="left:177px;top:629px;width:783px"></div>
<div class="vl" style="left:177px;top:501px;height:129px"></div>
<div class="vl" style="left:223px;top:501px;height:129px"></div>
<div class="vl" style="left:254px;top:501px;height:129px"></div>
<div class="vl" style="left:455px;top:501px;height:129px"></div>
<div class="vl" style="left:486px;top:501px;height:129px"></div>
<div class="vl" style="left:615px;top:501px;height:129px"></div>
<div class="vl" style="left:683px;top:501px;height:129px"></div>
<div class="vl" style="left:941px;top:501px;height:129px"></div>
<div class="vl" style="left:959px;top:501px;height:129px"></div>
<div class="track" style="left:941px;top:502px;width:18px;height:127px"></div>
<div class="sb" style="left:941px;top:502px;width:17px;height:16px"><div class="arrup" style="left:4px;top:5px"></div></div>
<div class="sb" style="left:941px;top:589px;width:17px;height:24px"></div>
<div class="sb" style="left:941px;top:613px;width:17px;height:16px"><div class="arrdn" style="left:4px;top:6px"></div></div>
<div class="t" style="left:482px;top:625px;color:#8A8A8A;font-size:10.5px">60.1 - 51.1 тип- 103.1</div>
<div class="hl" style="left:177px;top:629px;width:783px"></div>
<div class="btn" style="left:777px;top:630px;width:77px;height:21px;line-height:20px">Перерасчет</div>
<div class="a" style="left:854px;top:630px;width:105px;height:22px;background:#ECE9D8;border:1px solid #000;box-shadow:inset 1px 1px 0 #fff, inset -1px -1px 0 #716F64, inset -2px -2px 0 #ACA899;text-align:center;line-height:20px"><div class="a" style="left:4px;top:3px;right:4px;bottom:3px;border:1px dotted #000"></div>Долг контрагенту</div>
</body></html>
